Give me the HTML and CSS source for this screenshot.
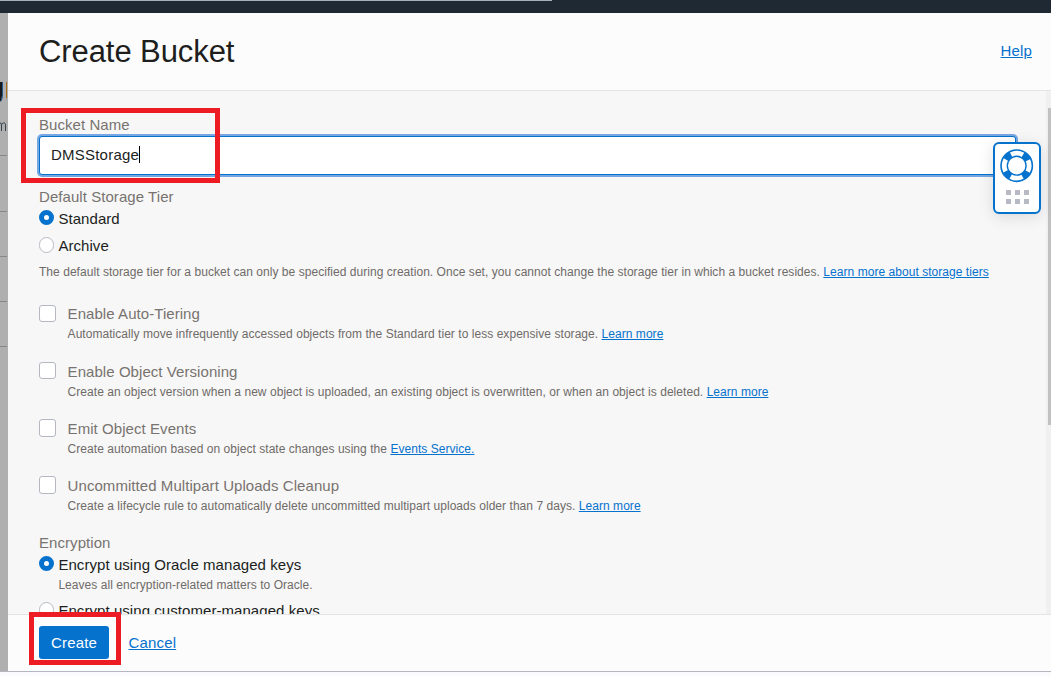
FILE: index.html
```html
<!DOCTYPE html>
<html lang="en">
<head>
<meta charset="utf-8">
<title>Create Bucket</title>
<link rel="stylesheet" href="styles.css">
</head>
<body>
<div class="topbar"><div class="progress"></div></div>
<div class="main">
  <aside class="backdrop">
    <svg width="8" height="658" viewBox="0 0 8 658">
      <path class="glyph" d="M0 69H2V82Q2 87 0 89Z"/>
      <path class="glyph-edge" d="M2.5 69V82Q2.5 86 1 88"/>
      <path class="accent" d="M6.5 69V85"/>
      <path class="stem" d="M0 110Q1.500 109.500 1.500 112V118M2 111Q5 108 5.500 112V118"/>
      <path class="rules" d="M0 142.500H7M0 198.500H7M0 243.500H7M0 288.500H7M0 333.500H7"/>
    </svg>
  </aside>
  <section class="panel">
    <header class="header"><h1 class="title">Create Bucket</h1><a class="link help">Help</a></header>
    <div class="content">
      <form class="form">
        <div class="label">Bucket Name</div>
        <div class="input"><span class="value">DMSStorage</span><span class="caret"></span></div>
        <div class="label">Default Storage Tier</div>
        <div class="option first"><span class="radio on"></span><span>Standard</span></div>
        <div class="option second"><span class="radio"></span><span>Archive</span></div>
        <p class="hint tier-hint">The default storage tier for a bucket can only be specified during creation. Once set, you cannot change the storage tier in which a bucket resides. <a class="link">Learn more about storage tiers</a></p>
        <div class="checks">
          <div class="check"><span class="box"></span><div><div class="label">Enable Auto-Tiering</div><p class="hint">Automatically move infrequently accessed objects from the Standard tier to less expensive storage. <a class="link">Learn more</a></p></div></div>
          <div class="check late"><span class="box"></span><div><div class="label">Enable Object Versioning</div><p class="hint">Create an object version when a new object is uploaded, an existing object is overwritten, or when an object is deleted. <a class="link">Learn more</a></p></div></div>
          <div class="check late"><span class="box"></span><div><div class="label">Emit Object Events</div><p class="hint">Create automation based on object state changes using the <a class="link">Events Service.</a></p></div></div>
          <div class="check late"><span class="box"></span><div><div class="label">Uncommitted Multipart Uploads Cleanup</div><p class="hint">Create a lifecycle rule to automatically delete uncommitted multipart uploads older than 7 days. <a class="link">Learn more</a></p></div></div>
        </div>
        <div class="label">Encryption</div>
        <div class="option first"><span class="radio on"></span><span>Encrypt using Oracle managed keys</span></div>
        <p class="hint nested">Leaves all encryption-related matters to Oracle.</p>
        <div class="option third"><span class="radio"></span><span>Encrypt using customer-managed keys</span></div>
      </form>
      <div class="track"><div class="thumb"></div></div>
    </div>
    <footer class="footer"><button class="create">Create</button><a class="link">Cancel</a></footer>
  </section>
</div>
<div class="support">
  <svg width="34" height="34" viewBox="0 0 34 34">
    <circle class="ring" cx="16.700" cy="16.700" r="12.600"/>
    <circle class="floats" cx="16.700" cy="16.700" r="12.500"/>
  </svg>
  <div class="dots"><i></i><i></i><i></i><i></i><i></i><i></i></div>
</div>
<div class="mark mark-name"></div>
<div class="mark mark-create"></div>
</body>
</html>
```
FILE: styles.css
```css
* { box-sizing: border-box; }
body { margin: 0; width: 1051px; height: 676px; overflow: hidden; position: relative; background: #fbfbfd; font: 15px/18px "Liberation Sans", Arial, sans-serif; letter-spacing: .06px; color: #201e1c; }
h1, p { margin: 0; font-weight: 400; }
.topbar { height: 13px; background: #1e2933; }
.progress { width: 552px; height: 1px; background: #a5b1b8; }
.main { display: flex; height: 659px; border-bottom: 1px solid #b4b6c2; }
.backdrop { width: 8px; background: #afafaf; }
.backdrop svg { display: block; fill: none; }
.backdrop .glyph { fill: #17191f; }
.glyph-edge { stroke: #24598c; }
.accent { stroke: #a96d16; }
.stem { stroke: #33434d; }
.rules { stroke: #858789; }
.panel { flex: 1; min-width: 0; display: flex; flex-direction: column; background: #fcfcfc; }
.header { height: 78px; border-bottom: 1px solid #e4e4e4; display: flex; justify-content: space-between; align-items: center; padding: 0 19px 0 31px; }
.title { font-size: 31px; line-height: 36px; letter-spacing: -.08px; }
.link { color: #0572ce; text-decoration: underline; }
.help { margin-bottom: 2px; letter-spacing: .15px; }
.content { height: 523px; overflow: hidden; display: flex; background: #f7f7f7; }
.form { flex: 1; padding: 25px 30px 0 31px; }
.label { color: #77736f; height: 18px; }
.input { height: 39px; margin: 2px 0 13px; border: 1px solid #0572ce; border-radius: 3px; box-shadow: 0 0 0 2px #76a7e2; background: #fff; display: flex; align-items: center; padding: 0 0 2px 11px; }
.value { letter-spacing: .22px; }
.caret { width: 1px; height: 17px; background: #000; }
.option { display: flex; height: 18px; gap: 4.4px; white-space: nowrap; }
.first { margin-top: 4px; }
.second { margin-top: 9px; }
.third { margin-top: 9px; }
.radio { flex: none; width: 15px; height: 15px; border: 1px solid #b7bac5; border-radius: 50%; background: #fff; }
.radio.on { border: 5px solid #0572ce; }
.second .radio, .third .radio { height: 16px; border-radius: 8px; }
.hint { font-size: 12px; line-height: 16px; letter-spacing: .044px; color: #6f6b68; white-space: nowrap; }
.tier-hint { margin-top: 9px; }
.checks { margin: 25px 0 20px; display: grid; grid-template-rows: 58px 57px 57px 37px; }
.check { display: flex; gap: 11.6px; }
.box { flex: none; width: 17px; height: 17px; border: 1px solid #b5b8c2; border-radius: 3px; background: #fff; }
.late .box { margin-top: -1px; }
.late + .late .box { height: 18px; }
.check .hint { margin-top: 3px; }
.nested { margin: 3px 0 0 19.4px; }
.track { width: 5px; background: #f0f0f0; padding: 17px 0 0 2px; }
.thumb { height: 317px; background: #c1c1c1; }
.footer { flex: 1; border-top: 1px solid #e4e4e4; padding: 11px 31px; display: flex; align-items: flex-start; gap: 19.500px; letter-spacing: .16px; }
.create { width: 70px; height: 33px; padding: 0; border: 0; border-radius: 3px; background: #0572ce; color: #fff; font: inherit; letter-spacing: inherit; }
.footer .link { margin-top: 8px; }
.support { position: absolute; left: 993px; top: 142px; width: 48px; height: 72px; border: 2px solid #0572ce; border-radius: 6px; background: #fff; box-shadow: 0 3px 16px rgba(0, 0, 0, .12); padding-top: 5px; display: flex; flex-direction: column; align-items: center; }
.support svg { display: block; fill: none; }
.ring { stroke: #0572ce; stroke-width: 7.800; }
.floats { stroke: #fff; stroke-width: 4.800; stroke-dasharray: 12.400 7.235; stroke-dashoffset: 6.200; }
.dots { display: grid; grid-template-columns: repeat(3, 5px); grid-auto-rows: 5px; gap: 4px; margin-top: 7px; }
.dots i { background: #b7bac3; }
.mark { position: absolute; border: 5px solid #ed1c24; }
.mark-name { left: 21px; top: 108px; width: 199px; height: 75px; }
.mark-create { left: 29px; top: 612px; width: 92px; height: 53px; }
```
